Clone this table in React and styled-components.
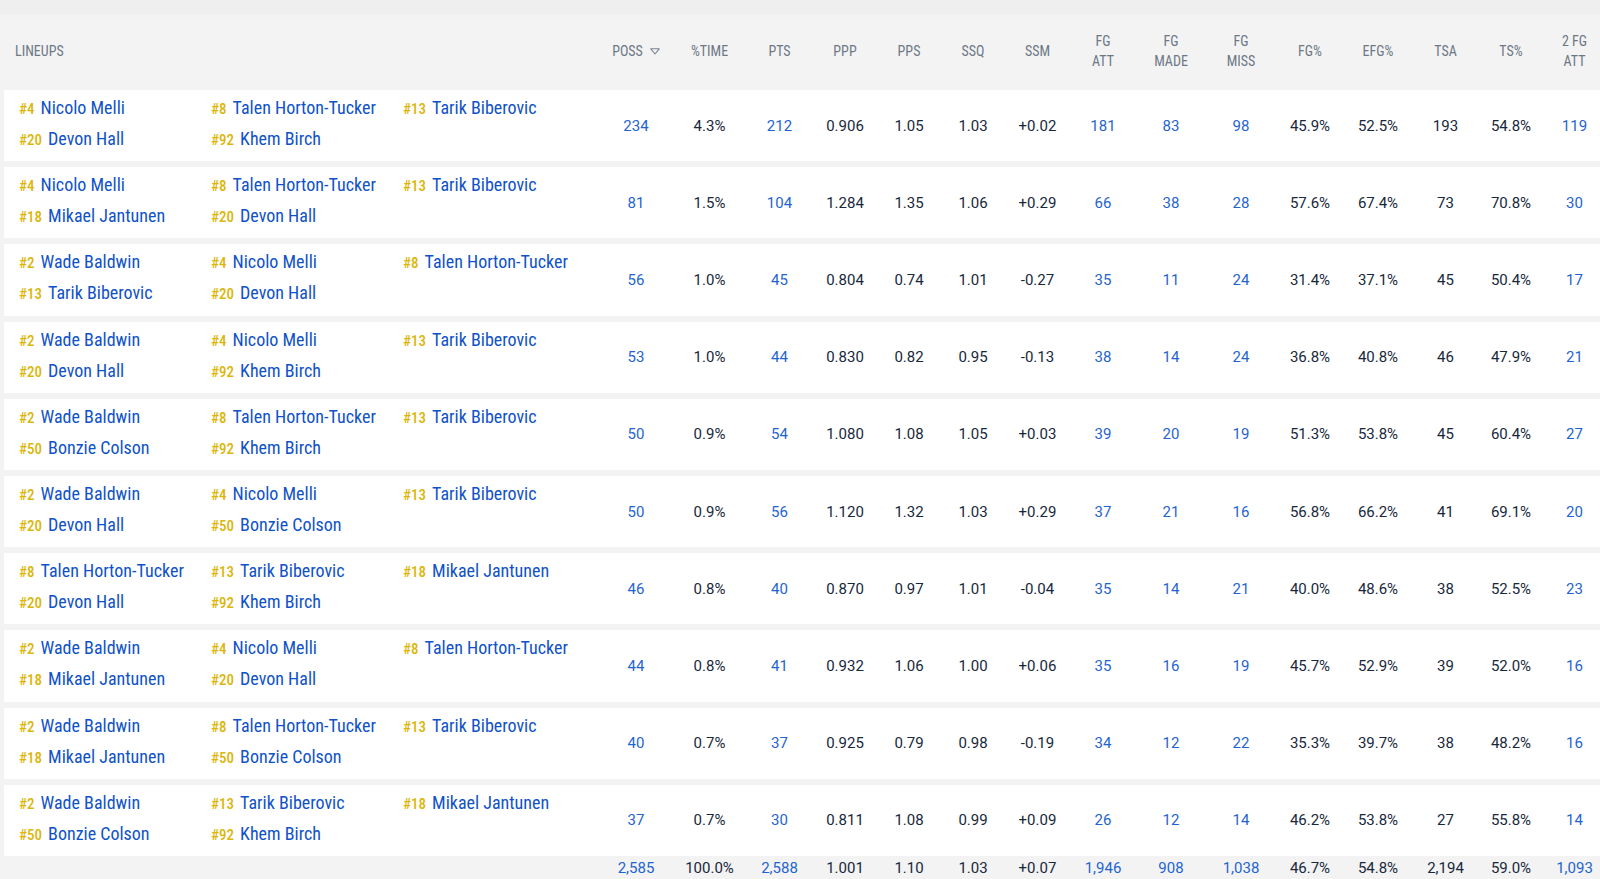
import React from "react";
import styled, { createGlobalStyle } from "styled-components";

const GlobalStyle = createGlobalStyle`
  body {
    margin: 0;
    background: #efeff0;
    font-family: Roboto, "Liberation Sans", sans-serif;
  }
`;

const columns = [
  { key: "poss", label: ["POSS"], width: 74, link: true, sort: true },
  { key: "time", label: ["%TIME"], width: 73 },
  { key: "pts", label: ["PTS"], width: 67, link: true },
  { key: "ppp", label: ["PPP"], width: 64 },
  { key: "pps", label: ["PPS"], width: 64 },
  { key: "ssq", label: ["SSQ"], width: 64 },
  { key: "ssm", label: ["SSM"], width: 65 },
  { key: "fga", label: ["FG", "ATT"], width: 66, link: true },
  { key: "fgm", label: ["FG", "MADE"], width: 70, link: true },
  { key: "fgx", label: ["FG", "MISS"], width: 70, link: true },
  { key: "fgp", label: ["FG%"], width: 68 },
  { key: "efg", label: ["EFG%"], width: 68 },
  { key: "tsa", label: ["TSA"], width: 67 },
  { key: "tsp", label: ["TS%"], width: 64 },
  { key: "fg2a", label: ["2 FG", "ATT"], width: 63, link: true },
];

const lineups = [
  {
    players: [["4", "Nicolo Melli"], ["8", "Talen Horton-Tucker"], ["13", "Tarik Biberovic"], ["20", "Devon Hall"], ["92", "Khem Birch"]],
    stats: ["234", "4.3%", "212", "0.906", "1.05", "1.03", "+0.02", "181", "83", "98", "45.9%", "52.5%", "193", "54.8%", "119"],
  },
  {
    players: [["4", "Nicolo Melli"], ["8", "Talen Horton-Tucker"], ["13", "Tarik Biberovic"], ["18", "Mikael Jantunen"], ["20", "Devon Hall"]],
    stats: ["81", "1.5%", "104", "1.284", "1.35", "1.06", "+0.29", "66", "38", "28", "57.6%", "67.4%", "73", "70.8%", "30"],
  },
  {
    players: [["2", "Wade Baldwin"], ["4", "Nicolo Melli"], ["8", "Talen Horton-Tucker"], ["13", "Tarik Biberovic"], ["20", "Devon Hall"]],
    stats: ["56", "1.0%", "45", "0.804", "0.74", "1.01", "-0.27", "35", "11", "24", "31.4%", "37.1%", "45", "50.4%", "17"],
  },
  {
    players: [["2", "Wade Baldwin"], ["4", "Nicolo Melli"], ["13", "Tarik Biberovic"], ["20", "Devon Hall"], ["92", "Khem Birch"]],
    stats: ["53", "1.0%", "44", "0.830", "0.82", "0.95", "-0.13", "38", "14", "24", "36.8%", "40.8%", "46", "47.9%", "21"],
  },
  {
    players: [["2", "Wade Baldwin"], ["8", "Talen Horton-Tucker"], ["13", "Tarik Biberovic"], ["50", "Bonzie Colson"], ["92", "Khem Birch"]],
    stats: ["50", "0.9%", "54", "1.080", "1.08", "1.05", "+0.03", "39", "20", "19", "51.3%", "53.8%", "45", "60.4%", "27"],
  },
  {
    players: [["2", "Wade Baldwin"], ["4", "Nicolo Melli"], ["13", "Tarik Biberovic"], ["20", "Devon Hall"], ["50", "Bonzie Colson"]],
    stats: ["50", "0.9%", "56", "1.120", "1.32", "1.03", "+0.29", "37", "21", "16", "56.8%", "66.2%", "41", "69.1%", "20"],
  },
  {
    players: [["8", "Talen Horton-Tucker"], ["13", "Tarik Biberovic"], ["18", "Mikael Jantunen"], ["20", "Devon Hall"], ["92", "Khem Birch"]],
    stats: ["46", "0.8%", "40", "0.870", "0.97", "1.01", "-0.04", "35", "14", "21", "40.0%", "48.6%", "38", "52.5%", "23"],
  },
  {
    players: [["2", "Wade Baldwin"], ["4", "Nicolo Melli"], ["8", "Talen Horton-Tucker"], ["18", "Mikael Jantunen"], ["20", "Devon Hall"]],
    stats: ["44", "0.8%", "41", "0.932", "1.06", "1.00", "+0.06", "35", "16", "19", "45.7%", "52.9%", "39", "52.0%", "16"],
  },
  {
    players: [["2", "Wade Baldwin"], ["8", "Talen Horton-Tucker"], ["13", "Tarik Biberovic"], ["18", "Mikael Jantunen"], ["50", "Bonzie Colson"]],
    stats: ["40", "0.7%", "37", "0.925", "0.79", "0.98", "-0.19", "34", "12", "22", "35.3%", "39.7%", "38", "48.2%", "16"],
  },
  {
    players: [["2", "Wade Baldwin"], ["13", "Tarik Biberovic"], ["18", "Mikael Jantunen"], ["50", "Bonzie Colson"], ["92", "Khem Birch"]],
    stats: ["37", "0.7%", "30", "0.811", "1.08", "0.99", "+0.09", "26", "12", "14", "46.2%", "53.8%", "27", "55.8%", "14"],
  },
];

const totals = ["2,585", "100.0%", "2,588", "1.001", "1.10", "1.03", "+0.07", "1,946", "908", "1,038", "46.7%", "54.8%", "2,194", "59.0%", "1,093"];

const SortIcon = () => (
  <svg width="10" height="7" viewBox="0 0 10 7" fill="none">
    <path d="M0.8 0.8 H9.2 L5 6 Z" stroke="#7a8591" strokeWidth="1.1" strokeLinejoin="round" />
  </svg>
);

const App = () => {
  return (
    <>
      <GlobalStyle />
      <Page>
        <Table>
          <HeaderRow>
            <LineupHead>LINEUPS</LineupHead>
            {columns.map((c) => (
              <HeadCell key={c.key} $width={c.width}>
                {c.label.map((l) => (
                  <HeadLine key={l}>{l}</HeadLine>
                ))}
                {c.sort && <SortIcon />}
              </HeadCell>
            ))}
          </HeaderRow>

          <Body>
            {lineups.map((row, i) => (
              <Row key={i}>
                <LineupCell>
                  {row.players.map(([num, name]) => (
                    <Player key={num}>
                      <Jersey>#{num}</Jersey>
                      <Name>{name}</Name>
                    </Player>
                  ))}
                </LineupCell>
                {columns.map((c, j) => (
                  <StatCell key={c.key} $width={c.width} $link={c.link}>
                    {row.stats[j]}
                  </StatCell>
                ))}
              </Row>
            ))}
          </Body>

          <TotalsRow>
            <TotalsLabel />
            {columns.map((c, j) => (
              <StatCell key={c.key} $width={c.width} $link={c.link}>
                {totals[j]}
              </StatCell>
            ))}
          </TotalsRow>
        </Table>
      </Page>
    </>
  );
};

const Page = styled.div`
  height: 100vh;
  padding-top: 14px;
  box-sizing: border-box;
  overflow: hidden;
`;

const Table = styled.div`
  width: 1660px;
  background: #f3f3f4;
  min-height: 100%;
`;

const HeaderRow = styled.div`
  display: flex;
  align-items: center;
  height: 76px;
  padding-bottom: 2px;
  box-sizing: border-box;
  font-size: 14px;
  font-stretch: 87.5%;
  color: #6d7884;
`;

const LineupHead = styled.div`
  width: 599px;
  flex: none;
  padding-left: 15px;
  box-sizing: border-box;
`;

const HeadCell = styled.div`
  width: ${(p) => p.$width}px;
  flex: none;
  display: flex;
  flex-wrap: wrap;
  justify-content: center;
  align-items: center;
  gap: 0 7px;
  line-height: 20px;
  text-align: center;
`;

const HeadLine = styled.span`
  & + & {
    flex-basis: 100%;
  }
`;

const Body = styled.div`
  display: flex;
  flex-direction: column;
  gap: 6px;
  padding-left: 4px;
`;

const Row = styled.div`
  display: flex;
  align-items: center;
  height: 71.2px;
  background: #ffffff;
`;

const LineupCell = styled.div`
  width: 595px;
  flex: none;
  align-self: stretch;
  display: grid;
  grid-template-columns: repeat(3, 192px);
  grid-auto-rows: 22px;
  row-gap: 9px;
  align-content: start;
  padding: 7px 0 0 15px;
  box-sizing: border-box;
`;

const Player = styled.div`
  display: flex;
  align-items: baseline;
  gap: 6px;
  line-height: 22px;
  white-space: nowrap;
`;

const Jersey = styled.span`
  font-size: 15px;
  font-weight: 500;
  font-stretch: 87.5%;
  color: #dcb60a;
`;

const Name = styled.span`
  font-size: 18px;
  font-stretch: 87.5%;
  color: #0f52c8;
`;

const StatCell = styled.div`
  width: ${(p) => p.$width}px;
  flex: none;
  text-align: center;
  font-size: 15px;
  line-height: 22px;
  color: ${(p) => (p.$link ? "#1f64d0" : "#18283b")};
`;

const TotalsRow = styled.div`
  display: flex;
  padding-top: 1px;
`;

const TotalsLabel = styled.div`
  width: 599px;
  flex: none;
`;

export default App;
